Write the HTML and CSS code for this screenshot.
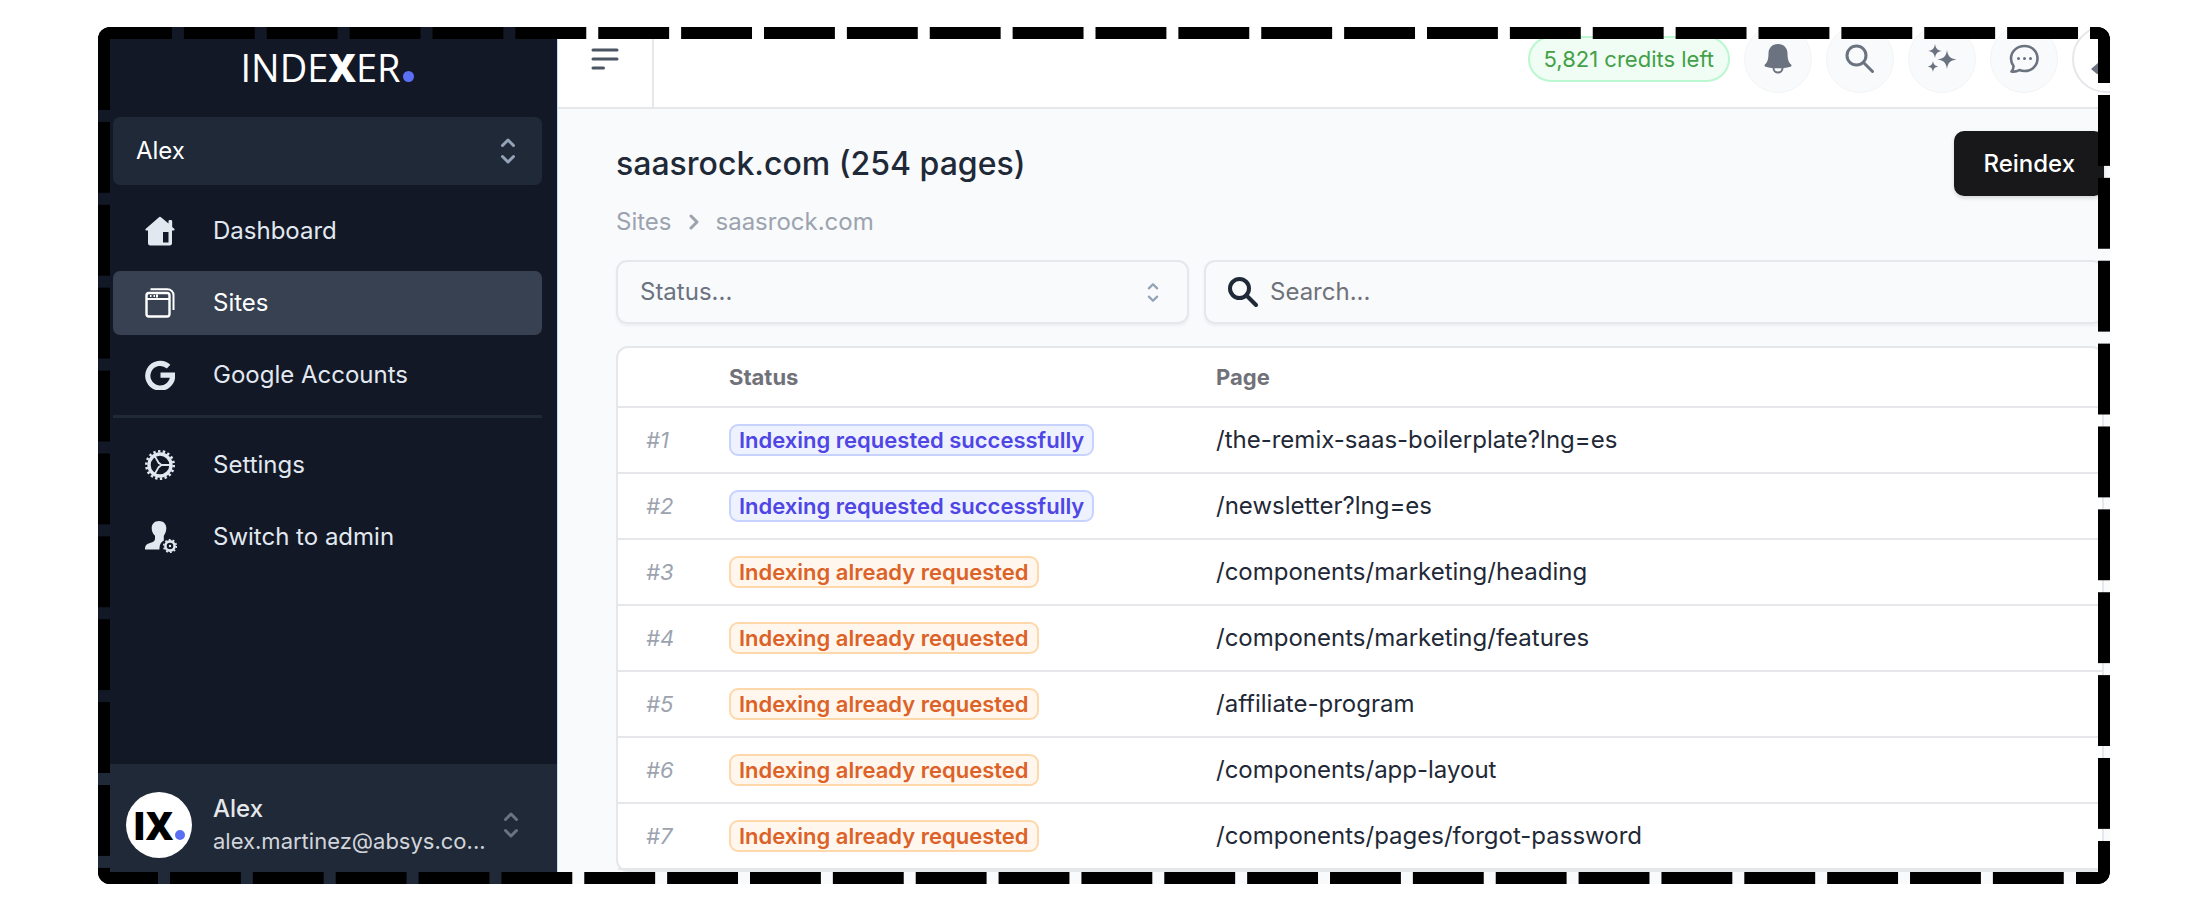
FILE: index.html
```html
<!DOCTYPE html>
<html lang="en">
<head>
<meta charset="utf-8">
<title>Indexer – saasrock.com</title>
<link rel="stylesheet" href="styles.css">
</head>
<body>
<div class="frame">
  <div class="app">
    <aside class="sidebar">
      <div class="brand"><span>INDE<b>X</b>ER</span><i class="brand-dot"></i></div>
      <button class="account" type="button">
        <span>Alex</span>
        <svg class="updown" viewBox="0 0 16 28" aria-hidden="true"><path d="M2.500 8.500 8 3l5.500 5.500M2.500 19.500 8 25l5.500-5.500"/></svg>
      </button>
      <nav class="nav">
        <a class="nav-item" href="#">
          <svg viewBox="0 0 30 30" aria-hidden="true"><path fill="currentColor" fill-rule="evenodd" d="M13.700 1.400a2 2 0 0 1 2.600 0l7.200 6V5.200a1.200 1.200 0 0 1 1.200-1.200h1.300a1.200 1.200 0 0 1 1.200 1.200v5.800l2 1.700c.8.800.3 1.800-.6 1.800H27v12.700a2.300 2.300 0 0 1-2.300 2.300H5.300A2.300 2.300 0 0 1 3 27.200V14.500H1.400c-.9 0-1.400-1-.6-1.800zM18 16v10.500h5.500V16z"/></svg>
          <span>Dashboard</span>
        </a>
        <a class="nav-item active" href="#">
          <svg viewBox="0 0 30 30" fill="none" stroke="currentColor" aria-hidden="true"><rect x="1.500" y="5" width="23" height="23.500" rx="2.500" stroke-width="2.400"/><path stroke-width="2" d="M2 11h22M5.500 1.300h17a6 6 0 0 1 6 6V22M5 8h1.500M8.500 8H10M12 6.500v3"/></svg>
          <span>Sites</span>
        </a>
        <a class="nav-item" href="#">
          <svg viewBox="0 0 30 30" fill="none" stroke="currentColor" stroke-width="5.200" aria-hidden="true"><path d="M23.600 6.600A12.400 12.400 0 1 0 27.600 15.200H15.500"/></svg>
          <span>Google Accounts</span>
        </a>
        <hr class="nav-rule">
        <a class="nav-item" href="#">
          <svg viewBox="0 0 30 30" fill="none" stroke="currentColor" aria-hidden="true"><circle cx="15" cy="15" r="11" stroke-width="3.400"/><circle cx="15" cy="15" r="13.700" stroke-width="2.600" stroke-dasharray="2.400 2.380"/><path stroke-width="1.800" d="M17 15h9M14 13.500 9.500 5.600M14 16.500l-4.500 7.900M14 13l2.500 2-2.500 2"/></svg>
          <span>Settings</span>
        </a>
        <a class="nav-item" href="#">
          <svg class="wide" viewBox="0 0 32 32" aria-hidden="true"><path fill="currentColor" d="M14 0c4.500 0 7.500 3 7.300 7.500-.1 3-1.300 5.600-2.500 7.300v4.700c-2.800 1.500-4.600 4.500-4.300 9H0c-.2-4 1.500-5.500 5-6.500 3-.9 5-2 5-4v-3.200C8 13 6.800 10.500 6.700 7.500 6.500 3 9.500 0 14 0z"/><circle cx="25" cy="25" r="4.600" fill="none" stroke="currentColor" stroke-width="2.600"/><circle cx="25" cy="25" r="6.300" fill="none" stroke="currentColor" stroke-width="1.600" stroke-dasharray="1.800 2.160"/><circle cx="25" cy="25" r="1.200" fill="currentColor"/></svg>
          <span>Switch to admin</span>
        </a>
      </nav>
      <button class="profile" type="button">
        <span class="avatar">IX<i></i></span>
        <span class="who"><span class="who-name">Alex</span><span class="who-mail">alex.martinez@absys.co...</span></span>
        <svg class="updown" viewBox="0 0 16 28" aria-hidden="true"><path d="M2.500 8.500 8 3l5.500 5.500M2.500 19.500 8 25l5.500-5.500"/></svg>
      </button>
    </aside>
    <div class="main">
      <header class="topbar">
        <button class="menu" type="button" aria-label="Toggle sidebar">
          <svg viewBox="0 0 24 24" aria-hidden="true"><path d="M4 6h16M4 12h16M4 18h7"/></svg>
        </button>
        <div class="tools">
          <a class="credits" href="#">5,821 credits left</a>
          <button class="round" type="button" aria-label="Notifications"><svg viewBox="0 0 30 30" aria-hidden="true"><path fill="currentColor" d="M15 0c6 0 9.500 4.200 9.500 9.500 0 6 1.300 8.800 3.600 11 .8.900.4 2-.7 2.300-8 2-16.800 2-24.800 0-1.100-.3-1.500-1.400-.7-2.300 2.300-2.200 3.600-5 3.600-11C5.500 4.200 9 0 15 0z"/><path fill="none" stroke="currentColor" stroke-width="2" d="M10.500 24a4.500 4.500 0 0 0 9 0"/></svg></button>
          <button class="round" type="button" aria-label="Search"><svg viewBox="0 0 30 30" fill="none" stroke="currentColor" stroke-width="3" stroke-linecap="round" aria-hidden="true"><circle cx="11.500" cy="11.500" r="9.500"/><path d="m18.500 18.500 9 9"/></svg></button>
          <button class="round" type="button" aria-label="Assistant"><svg viewBox="0 0 30 30" fill="currentColor" aria-hidden="true"><path d="M20 6c1 6.500 3 8.500 9.500 9.500C23 16.500 21 18.500 20 25c-1-6.500-3-8.500-9.500-9.500C17 14.500 19 12.500 20 6zM8 0c.8 4.600 2.400 6.200 7 7-4.600.8-6.200 2.400-7 7-.8-4.600-2.400-6.200-7-7 4.600-.8 6.200-2.400 7-7zM6 17c.7 3.700 1.800 4.800 5.500 5.500C7.800 23.200 6.700 24.300 6 28c-.7-3.700-1.800-4.800-5.500-5.500C4.200 21.800 5.300 20.700 6 17z"/></svg></button>
          <button class="round" type="button" aria-label="Messages"><svg viewBox="0 0 30 30" aria-hidden="true"><path fill="none" stroke="currentColor" stroke-width="2.600" stroke-linejoin="round" d="M15.500 2C23 2 28.500 7.500 28.500 14.500S23 27 15.500 27c-1.800 0-3.500-.3-5-1-2.500 1.500-5 2-8 1.500 1.500-1.800 2.200-3.500 2-5.500-1.600-2-2.500-4.500-2.500-7.500C2 7.500 8 2 15.500 2z"/><path fill="none" stroke="currentColor" stroke-width="3" stroke-linecap="round" d="M9.500 14.500h.01M15.500 14.500h.01M21.500 14.500h.01"/></svg></button>
          <button class="round user" type="button" aria-label="Account"><svg viewBox="0 0 30 30" fill="currentColor" aria-hidden="true"><circle cx="15" cy="8" r="7"/><path d="M0 25 7 19h16l7 6-6 5H6z"/></svg></button>
        </div>
      </header>
      <main class="content">
        <div class="heading">
          <h1>saasrock.com (254 pages)</h1>
          <button class="reindex" type="button">Reindex</button>
        </div>
        <nav class="crumbs" aria-label="Breadcrumb">
          <a href="#">Sites</a>
          <svg viewBox="0 0 12 16" aria-hidden="true"><path d="m3 2 6 6-6 6"/></svg>
          <a href="#">saasrock.com</a>
        </nav>
        <div class="filters">
          <button class="field status" type="button"><span>Status...</span><svg class="updown" viewBox="0 0 16 28" aria-hidden="true"><path d="M2.500 8.500 8 3l5.500 5.500M2.500 19.500 8 25l5.500-5.500"/></svg></button>
          <label class="field search">
            <svg viewBox="0 0 30 30" aria-label="Search"><circle cx="11.500" cy="11.500" r="9.500"/><path d="m18.500 18.500 9.500 9.500"/></svg>
            <input type="text" placeholder="Search...">
          </label>
        </div>
        <div class="card">
          <table>
            <thead><tr><th class="num"></th><th class="state">Status</th><th>Page</th></tr></thead>
            <tbody>
              <tr><td class="num">#1</td><td><span class="badge ok">Indexing requested successfully</span></td><td>/the-remix-saas-boilerplate?lng=es</td></tr>
              <tr><td class="num">#2</td><td><span class="badge ok">Indexing requested successfully</span></td><td>/newsletter?lng=es</td></tr>
              <tr><td class="num">#3</td><td><span class="badge wait">Indexing already requested</span></td><td>/components/marketing/heading</td></tr>
              <tr><td class="num">#4</td><td><span class="badge wait">Indexing already requested</span></td><td>/components/marketing/features</td></tr>
              <tr><td class="num">#5</td><td><span class="badge wait">Indexing already requested</span></td><td>/affiliate-program</td></tr>
              <tr><td class="num">#6</td><td><span class="badge wait">Indexing already requested</span></td><td>/components/app-layout</td></tr>
              <tr><td class="num">#7</td><td><span class="badge wait">Indexing already requested</span></td><td>/components/pages/forgot-password</td></tr>
            </tbody>
          </table>
        </div>
      </main>
    </div>
  </div>
  <div class="dashes" aria-hidden="true">
    <i class="edge top"></i><i class="edge right"></i><i class="edge bottom"></i><i class="edge left"></i>
  </div>
</div>
</body>
</html>
```
FILE: styles.css
```css
* { box-sizing: border-box; }
body {
  margin: 0;
  min-height: 100vh;
  padding: 27px 94px 40px 98px;
  display: flex;
  background: #fff;
  color: #1f2937;
  font: 24px/32px Inter, "Liberation Sans", sans-serif;
}
button, input { font: inherit; color: inherit; }
button { border: 0; padding: 0; background: none; cursor: pointer; text-align: left; }
a { color: inherit; text-decoration: none; }
svg { display: block; flex: none; }

.frame { position: relative; flex: 1; display: flex; border-radius: 12px; overflow: hidden; }
.app { flex: 1; display: flex; min-width: 0; }

/* Sidebar */
.sidebar {
  flex: none;
  width: 460px;
  display: flex;
  flex-direction: column;
  background: #121826;
  border-right: 1px solid #bfdbfe;
  color: #e2e8f0;
}
.brand {
  display: flex;
  justify-content: center;
  align-items: baseline;
  gap: 3px;
  padding: 16px 0 26px;
  color: #fff;
  font: 400 38px/48px "Open Sans", sans-serif;
}
.brand b { font-weight: 800; }
.brand-dot { width: 11px; height: 11px; border-radius: 50%; background: #5b6ff5; }
.account {
  display: flex;
  align-items: center;
  justify-content: space-between;
  height: 68px;
  margin: 0 15px;
  padding: 0 26px 0 23px;
  border-radius: 7px;
  background: #202938;
  color: #fff;
}
.updown { width: 16px; height: 28px; fill: none; stroke: #94a3b8; stroke-width: 3; stroke-linecap: round; stroke-linejoin: round; }
.nav { flex: 1; display: flex; flex-direction: column; gap: 8px; padding: 14px 15px 0; }
.nav-item {
  display: flex;
  align-items: center;
  gap: 38px;
  height: 64px;
  padding-left: 32px;
  border-radius: 7px;
}
.nav-item svg { width: 30px; height: 30px; }
.nav-item svg.wide { width: 32px; height: 32px; margin-right: -2px; }
.nav-item.active { background: #374151; color: #fff; }
.nav-rule { width: 100%; height: 3px; margin: 0 0 7px; border: 0; background: #202938; }
.profile {
  display: flex;
  align-items: center;
  height: 120px;
  padding: 2px 38px 0 28px;
  background: #202938;
}
.avatar {
  flex: none;
  width: 66px;
  height: 66px;
  display: flex;
  align-items: baseline;
  justify-content: center;
  gap: 2px;
  margin-right: 21px;
  border-radius: 50%;
  background: #fff;
  color: #000;
  font: 800 38px/66px "Open Sans", sans-serif;
}
.avatar i { width: 10px; height: 10px; border-radius: 50%; background: #5b6ff5; }
.who { flex: 1; display: flex; flex-direction: column; }
.who-name { color: #e5e7eb; font-weight: 500; }
.who-mail { color: #d1d5db; font-size: 22px; }
.profile .updown { stroke: #6b7280; }

/* Header bar */
.main { flex: 1; min-width: 0; display: flex; flex-direction: column; background: #f8fafc; }
.topbar {
  display: flex;
  height: 99px;
  margin-top: -17px;
  border-bottom: 2px solid #e5e7eb;
  background: #fff;
}
.menu { flex: none; width: 96px; display: grid; place-items: center; border-right: 2px solid #e5e7eb; }
.menu svg { width: 36px; height: 36px; fill: none; stroke: #4b5563; stroke-width: 2; stroke-linecap: round; }
.tools { flex: 1; display: flex; align-items: center; justify-content: flex-end; gap: 14px; margin-right: -30px; }
.credits {
  height: 46px;
  padding: 0 14px;
  border: 2px solid #bbf7d0;
  border-radius: 23px;
  background: #f0fdf4;
  color: #43a047;
  font-size: 22px;
  line-height: 42px;
}
.round {
  flex: none;
  width: 68px;
  height: 68px;
  display: grid;
  place-items: center;
  border: 1px solid #f1f3f5;
  border-radius: 50%;
  background: #f9fafb;
  color: #6b7280;
}
.round svg { width: 30px; height: 30px; }
.round.user { border: 2px solid #e5e7eb; background: #fff; }

/* Page content */
.content { padding: 22px 6px 0 58px; }
.heading { display: flex; align-items: center; justify-content: space-between; }
h1 { margin: 0; font-size: 32px; line-height: 40px; font-weight: 500; }
.reindex {
  height: 65px;
  padding: 0 29px;
  border-radius: 10px;
  background: #18181b;
  color: #fff;
  font-weight: 500;
  box-shadow: 0 2px 4px rgb(0 0 0 / 15%);
}
.crumbs { display: flex; align-items: center; gap: 16px; padding: 10px 0 22px; color: #9ca3af; }
.crumbs svg { width: 12px; height: 16px; fill: none; stroke: #9ca3af; stroke-width: 3; stroke-linecap: round; stroke-linejoin: round; }
.filters { display: grid; grid-template-columns: 573px 1fr; gap: 15px; }
.field {
  display: flex;
  align-items: center;
  height: 64px;
  padding: 0 22px;
  border: 2px solid #e5e7eb;
  border-radius: 11px;
  color: #6b7280;
  box-shadow: 0 2px 3px rgb(0 0 0 / 5%);
}
.status { justify-content: space-between; padding-right: 28px; }
.status .updown { width: 12px; height: 21px; }
.search { gap: 12px; }
.search svg { width: 30px; height: 30px; fill: none; stroke: #1f2937; stroke-width: 4; stroke-linecap: round; }
.search input { flex: 1; min-width: 0; border: 0; padding: 0; outline: 0; background: none; }
.search input::placeholder { color: #71717a; opacity: 1; }

.card { margin-top: 22px; border: 2px solid #e5e7eb; border-radius: 12px; background: #fff; }
table { width: 100%; border-collapse: collapse; }
th, td { height: 66px; padding: 0; text-align: left; border-bottom: 2px solid #e5e7eb; }
th { height: 59px; color: #71717a; font-size: 22px; font-weight: 700; }
.num { width: 111px; padding-left: 28px; color: #9ca3af; font-size: 22px; font-style: italic; }
.state { width: 487px; }
.badge {
  display: inline-block;
  padding: 0 8px;
  border: 2px solid;
  border-radius: 9px;
  font-size: 22px;
  line-height: 28px;
  font-weight: 600;
}
.badge.ok { color: #4f46e5; background: #eef2ff; border-color: #c7d2fe; }
.badge.wait { color: #dd6228; background: #fff7ed; border-color: #fed7aa; }

/* Dashed outline laid over the app */
.dashes { position: absolute; inset: 0; pointer-events: none; border-radius: 12px; overflow: hidden; }
.edge { position: absolute; border: 0 solid #000; }
.top, .bottom { left: 0; right: 0; height: 12px; background: linear-gradient(90deg, #000 71px, transparent 71px) 0 0 / 83px 12px round; }
.left, .right { top: 0; bottom: 0; width: 12px; background: linear-gradient(#000 71px, transparent 71px) 0 0 / 12px 83px round; }
.edge { background-origin: content-box; background-clip: content-box; }
.top { top: 0; border-left-width: 3px; border-right-width: 20px; }
.bottom { bottom: 0; padding-right: 12px; border-left-width: 60px; border-right-width: 34px; background-image: linear-gradient(90deg, transparent 12px, #000 12px); }
.left { left: 0; border-top-width: 12px; border-bottom-width: 16px; }
.right { right: 0; padding-bottom: 12px; border-top-width: 56px; border-bottom-width: 43px; background-image: linear-gradient(transparent 12px, #000 12px); }
```
